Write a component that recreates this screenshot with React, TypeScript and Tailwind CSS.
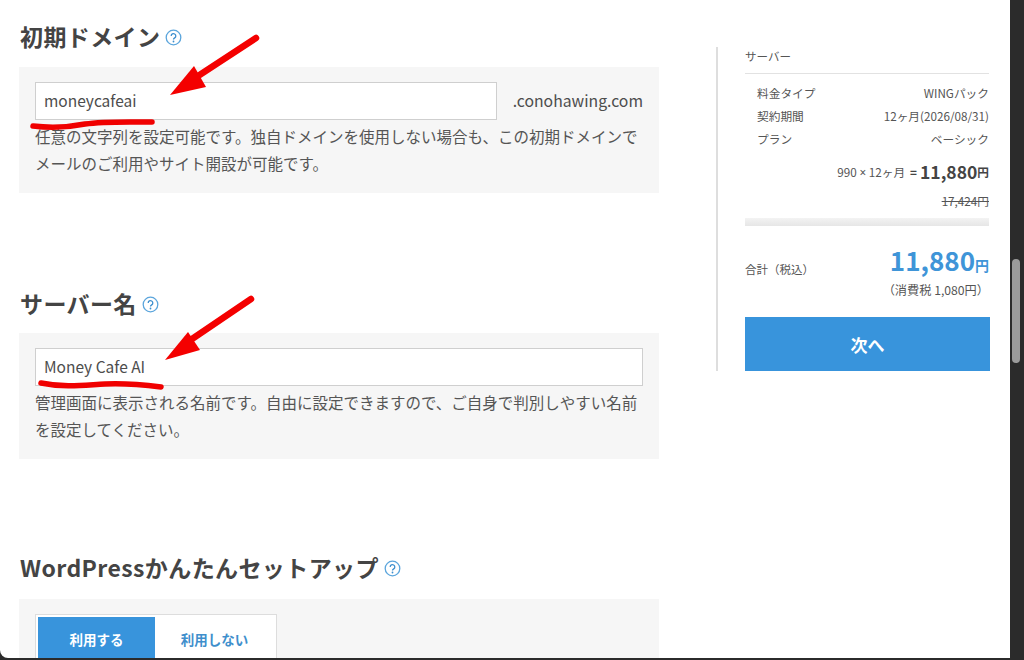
const FONT = "font-['Noto_Sans_CJK_JP','Noto_Sans',sans-serif]";

function HelpIcon() {
  return (
    <svg width="17" height="17" viewBox="0 0 17 17" className="ml-[5px] mt-[3px] shrink-0">
      <circle cx="8.5" cy="8.5" r="7.3" fill="none" stroke="#5ba5dc" strokeWidth="1.3" />
      <path d="M6.2 6.9a2.3 2.3 0 1 1 3.5 2c-.8.5-1.2.8-1.2 1.7" fill="none" stroke="#3d8fce" strokeWidth="1.3" />
      <circle cx="8.5" cy="12.5" r=".9" fill="#3d8fce" />
    </svg>
  );
}

function Heading({ children }: { children: string }) {
  return (
    <div className="flex items-center h-[30px] pl-[1px]">
      <h2 className="text-[23px] leading-[30px] font-bold text-[#444444] tracking-[0.4px]">{children}</h2>
      <HelpIcon />
    </div>
  );
}

function Row({ label, value }: { label: string; value: string }) {
  return (
    <div className="flex justify-between h-[23px] items-center pl-[12px]">
      <span>{label}</span>
      <span>{value}</span>
    </div>
  );
}

function Arrow({ x1, y1, x2, y2, head }: { x1: number; y1: number; x2: number; y2: number; head: string }) {
  return (
    <>
      <line x1={x1} y1={y1} x2={x2} y2={y2} stroke="#f40000" strokeWidth="6.5" strokeLinecap="round" />
      <polygon points={head} fill="#f40000" />
    </>
  );
}

export default function App() {
  return (
    <div className={`relative w-[1024px] h-[660px] overflow-hidden flex bg-[#2b2b2b] ${FONT}`}>
      <main className="w-[1010px] h-[658px] bg-white rounded-bl-[8px] overflow-hidden flex pl-[19px] shrink-0">
        <div className="w-[640px] shrink-0 pt-[21px]">
          <Heading>初期ドメイン</Heading>
          <section className="mt-[16px] h-[126px] bg-[#f6f6f6] px-[16px] pt-[15px]">
            <div className="flex items-center justify-between">
              <div className="w-[462px] h-[38px] bg-white border border-[#cfcfcf] pl-[8px] flex items-center text-[15.5px] text-[#4d4d4d]">
                moneycafeai
              </div>
              <span className="text-[15.75px] text-[#4d4d4d]">.conohawing.com</span>
            </div>
            <p className="mt-[3px] w-[608px] text-[15.5px] leading-[27px] text-[#555555]">
              任意の文字列を設定可能です。独自ドメインを使用しない場合も、この初期ドメインでメールのご利用やサイト開設が可能です。
            </p>
          </section>

          <div className="mt-[95px]">
            <Heading>サーバー名</Heading>
          </div>
          <section className="mt-[15px] h-[126px] bg-[#f6f6f6] px-[16px] pt-[15px]">
            <div className="w-[608px] h-[38px] bg-white border border-[#cfcfcf] pl-[8px] flex items-center text-[15.5px] text-[#4d4d4d]">
              Money Cafe AI
            </div>
            <p className="mt-[3px] w-[608px] text-[15.5px] leading-[27px] text-[#555555]">
              管理画面に表示される名前です。自由に設定できますので、ご自身で判別しやすい名前を設定してください。
            </p>
          </section>

          <div className="mt-[93px]">
            <Heading>WordPressかんたんセットアップ</Heading>
          </div>
          <section className="mt-[17px] h-[80px] bg-[#f6f6f6] px-[16px] pt-[15px]">
            <div className="w-[242px] h-[60px] bg-white border border-[#dddddd] p-[2px] flex text-[13.5px] font-bold">
              <div className="w-[117px] h-[44px] bg-[#3894dc] text-white flex items-center justify-center">利用する</div>
              <div className="flex-1 h-[44px] text-[#3f8fcc] flex items-center justify-center">利用しない</div>
            </div>
          </section>
        </div>

        <aside className="ml-[57px] mt-[47px] w-[273px] h-[324px] border-l-2 border-[#dedede] pl-[27px] shrink-0 text-[11.7px] text-[#555555]">
          <div className="h-[27px] border-b border-[#e2e2e2] text-[11.5px] leading-[18px]">サーバー</div>
          <div className="mt-[7px]">
            <Row label="料金タイプ" value="WINGパック" />
            <Row label="契約期間" value="12ヶ月(2026/08/31)" />
            <Row label="プラン" value="ベーシック" />
          </div>
          <div className="mt-[9px] h-[26px] flex justify-end items-center">
            <span>990 <span className="font-['Noto_Sans']">×</span> 12ヶ月</span>
            <span className="ml-[5px] font-bold text-[#444444]">=</span>
            <span className="ml-[3px] text-[17.5px] font-bold text-[#444444]">11,880</span>
            <span className="font-bold text-[#444444]">円</span>
          </div>
          <div className="mt-[6px] h-[20px] flex justify-end items-center line-through">17,424円</div>
          <div className="mt-[7px] h-[8px] bg-gradient-to-b from-[#f3f3f3] to-[#e6e6e6]" />
          <div className="mt-[17px] flex justify-between items-start">
            <span className="mt-[18px] text-[11.5px]">合計（税込）</span>
            <div className="flex items-baseline text-[#3f95d8] font-bold h-[34px]">
              <span className="text-[26px] leading-[34px]">11,880</span>
              <span className="text-[14px]">円</span>
            </div>
          </div>
          <div className="mt-[2px] h-[20px] text-right text-[12.2px] leading-[20px]">（消費税 1,080円）</div>
          <button className="mt-[17px] w-[245px] h-[54px] bg-[#3894dc] text-white text-[17px] font-bold">次へ</button>
        </aside>
      </main>

      <div className="w-[14px] shrink-0 pl-[2px] pt-[259px]">
        <div className="w-[8px] h-[104px] bg-[#9b9b9b] rounded-full" />
      </div>

      {/* annotations drawn over the page */}
      <svg width="1024" height="660" className="absolute left-0 top-0 pointer-events-none">
        <Arrow x1={256} y1={38} x2={198} y2={76} head="170,95 194,66 206,87" />
        <path d="M33 126 C50 128 70 127 85 124 C105 121 130 122 152 122" fill="none" stroke="#f00000" strokeWidth="5.5" strokeLinecap="round" />
        <Arrow x1={251} y1={299} x2={192} y2={339} head="165,360 188,332 200,350" />
        <path d="M41 383 C65 388 85 385 105 384 C125 383 145 385 161 387" fill="none" stroke="#f00000" strokeWidth="5.5" strokeLinecap="round" />
      </svg>
    </div>
  );
}
